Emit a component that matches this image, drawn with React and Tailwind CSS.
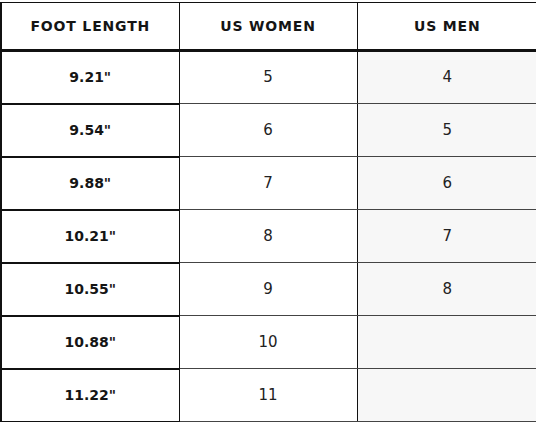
import React from 'react'

const rows = [
    ['9.21"', '5', '4'],
    ['9.54"', '6', '5'],
    ['9.88"', '7', '6'],
    ['10.21"', '8', '7'],
    ['10.55"', '9', '8'],
    ['10.88"', '10', ''],
    ['11.22"', '11', ''],
]

export default function App() {
    return (
        <div className="w-[536px] h-[422px] bg-white pt-[2px] overflow-hidden" style={{ fontFamily: '"DejaVu Sans", sans-serif' }}>
            <table className="w-full border-collapse table-fixed text-[#151515]">
                <colgroup>
                    <col className="w-[178px]" />
                    <col className="w-[178px]" />
                    <col className="w-[180px]" />
                </colgroup>
                <thead>
                    <tr className="h-[48px]">
                        <th className="border-t border-l-2 border-b-[3px] border-r border-[#111] text-[14px] font-bold uppercase tracking-[0.06em] text-center">Foot Length</th>
                        <th className="border-t border-b-[3px] border-r border-[#111] text-[14px] font-bold uppercase tracking-[0.06em] text-center">US Women</th>
                        <th className="border-t border-b-[3px] border-[#111] text-[14px] font-bold uppercase tracking-[0.06em] text-center">US Men</th>
                    </tr>
                </thead>
                <tbody>
                    {rows.map((r, i) => (
                        <tr key={i} className="h-[53px]">
                            <td className="border-l-2 border-b-2 border-r border-l-[#111] border-b-[#111] border-r-[#111] text-center text-[14px] font-bold">{r[0]}</td>
                            <td className="border-b border-r border-b-[#444] border-r-[#111] text-center text-[15px] text-[#222]">{r[1]}</td>
                            <td className="border-b border-b-[#444] bg-[#f7f7f7] text-center text-[15px] text-[#222]">{r[2]}</td>
                        </tr>
                    ))}
                </tbody>
            </table>
        </div>
    )
}
